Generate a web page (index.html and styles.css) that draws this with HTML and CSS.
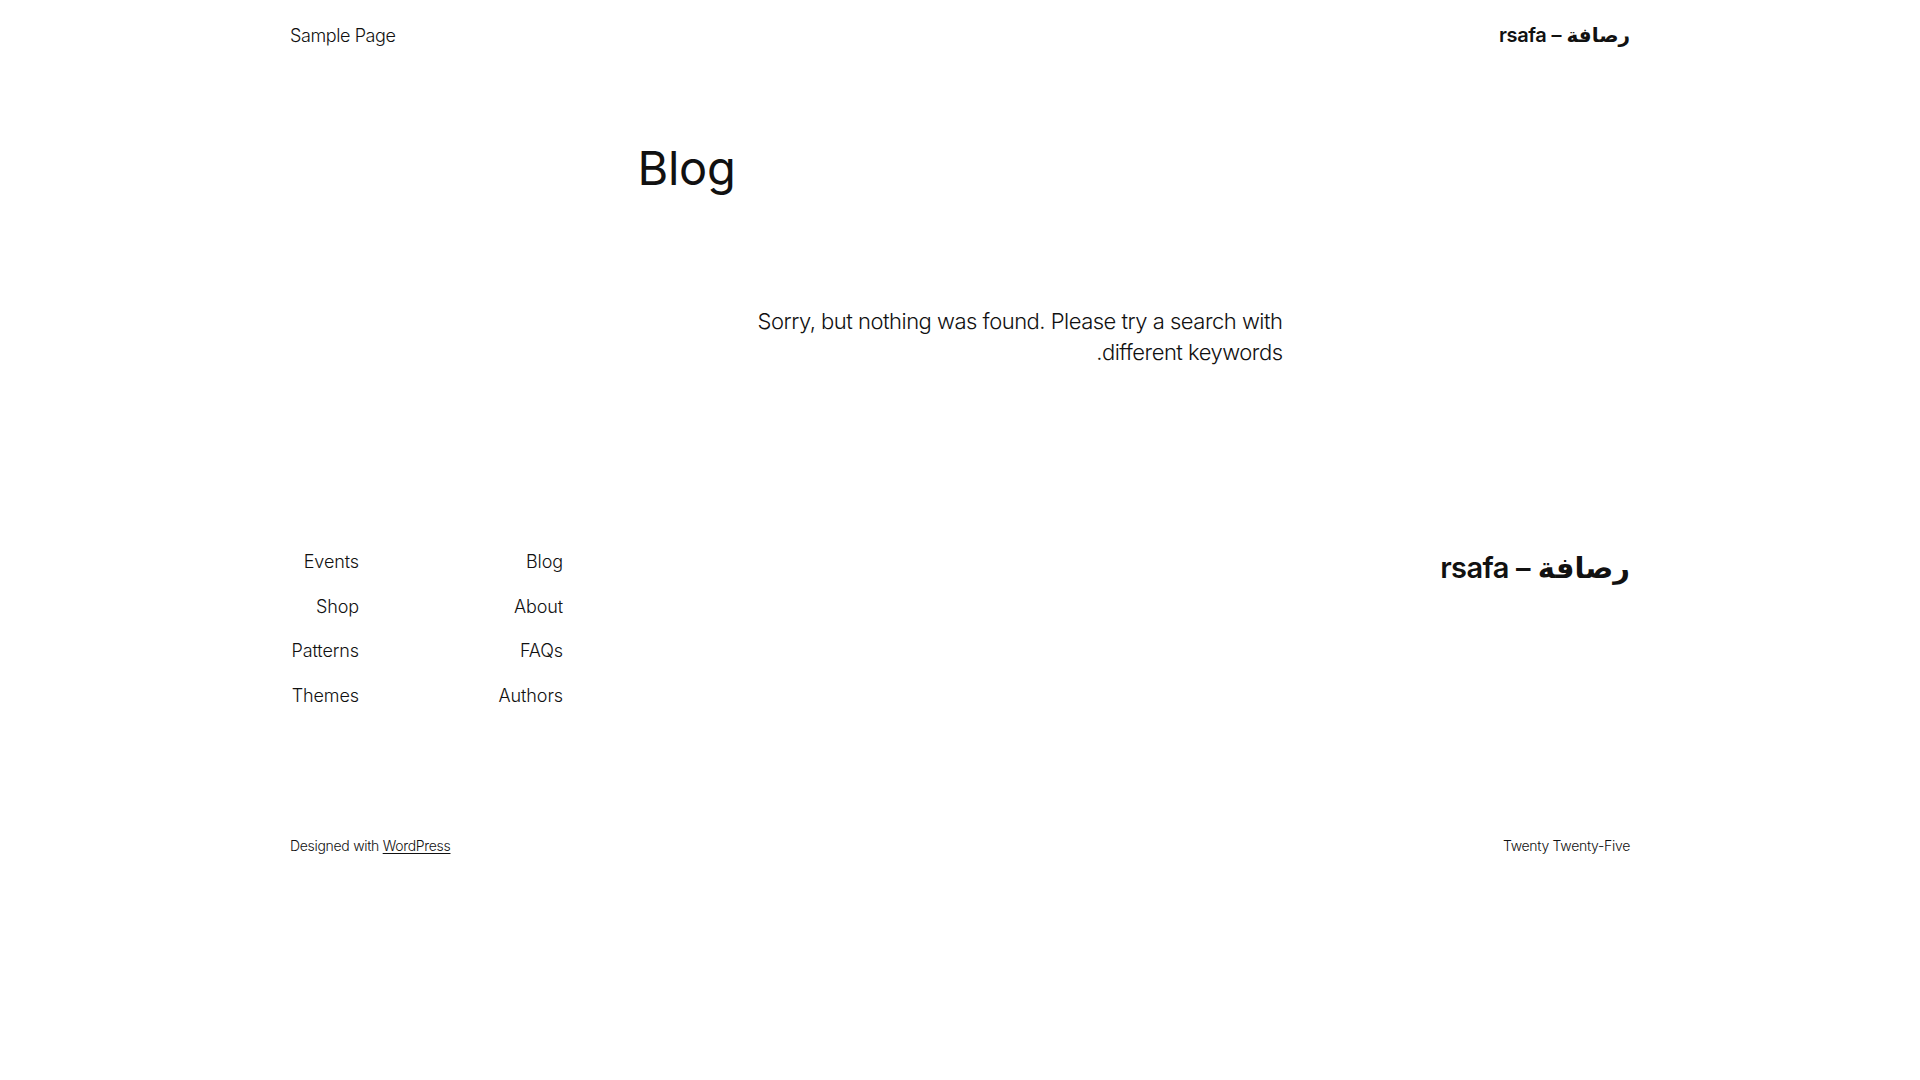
FILE: index.html
```html
<!DOCTYPE html>
<html lang="ar" dir="rtl">
<head>
    <meta charset="UTF-8">
    <meta name="viewport" content="width=device-width, initial-scale=1.0">
    <title>Blog – رصافة – rsafa</title>
    <link rel="stylesheet" href="styles.css">
</head>
<body>
    <header class="site-header">
        <a class="site-title" href="#">رصافة – rsafa</a>
        <nav class="header-nav">
            <a href="#">Sample Page</a>
        </nav>
    </header>

    <main class="site-main">
        <div class="content">
            <h1 class="query-title">Blog</h1>
            <p class="no-results">Sorry, but nothing was found. Please try a search with different keywords.</p>
        </div>
    </main>

    <footer class="site-footer">
        <div class="footer-top">
            <a class="site-title site-title-large" href="#">رصافة – rsafa</a>
            <div class="footer-navs">
                <nav class="footer-col">
                    <a href="#">Blog</a>
                    <a href="#">About</a>
                    <a href="#">FAQs</a>
                    <a href="#">Authors</a>
                </nav>
                <nav class="footer-col">
                    <a href="#">Events</a>
                    <a href="#">Shop</a>
                    <a href="#">Patterns</a>
                    <a href="#">Themes</a>
                </nav>
            </div>
        </div>

        <div class="footer-bottom">
            <p>Twenty Twenty-Five</p>
            <p>Designed with <a href="#">WordPress</a></p>
        </div>
    </footer>
</body>
</html>
```

FILE: styles.css
```css
* {
    margin: 0;
    padding: 0;
    box-sizing: border-box;
}

body {
    font-family: Inter, 'DejaVu Sans', sans-serif;
    font-weight: 300;
    color: #111111;
    background: #ffffff;
}

a {
    color: inherit;
    text-decoration: none;
}

.site-header {
    width: 1340px;
    margin: 0 auto;
    height: 70px;
    display: flex;
    justify-content: space-between;
    align-items: center;
}

.site-title {
    font-size: 20px;
    font-weight: 600;
    line-height: 1.2;
    letter-spacing: -0.4px;
}

.header-nav a {
    font-size: 18px;
    line-height: 1.5;
    letter-spacing: -0.4px;
}

.site-main {
    padding-top: 70px;
}

.content {
    width: 645px;
    margin: 0 auto;
}

.query-title {
    font-size: 47px;
    font-weight: 400;
    line-height: 1.2;
    text-align: left;
    letter-spacing: -0.3px;
}

.no-results {
    margin-top: 110px;
    max-width: 540px;
    font-size: 22px;
    line-height: 1.4;
    letter-spacing: -0.5px;
}

.site-footer {
    width: 1340px;
    margin: 180px auto 0;
}

.footer-top {
    display: flex;
    justify-content: space-between;
    align-items: flex-start;
}

.site-title-large {
    font-size: 29px;
    font-weight: 600;
    margin-top: 3px;
    letter-spacing: -0.6px;
}

.footer-navs {
    display: grid;
    grid-template-columns: 204px 69px;
}

.footer-col {
    display: flex;
    flex-direction: column;
    gap: 17.6px;
}

.footer-col a {
    font-size: 18px;
    line-height: 27px;
    letter-spacing: -0.1px;
}

.footer-bottom {
    margin-top: 126px;
    display: flex;
    justify-content: space-between;
    font-size: 14px;
    line-height: 21px;
    letter-spacing: -0.3px;
}

.footer-bottom a {
    text-decoration: underline;
    text-underline-offset: 2px;
}
```
